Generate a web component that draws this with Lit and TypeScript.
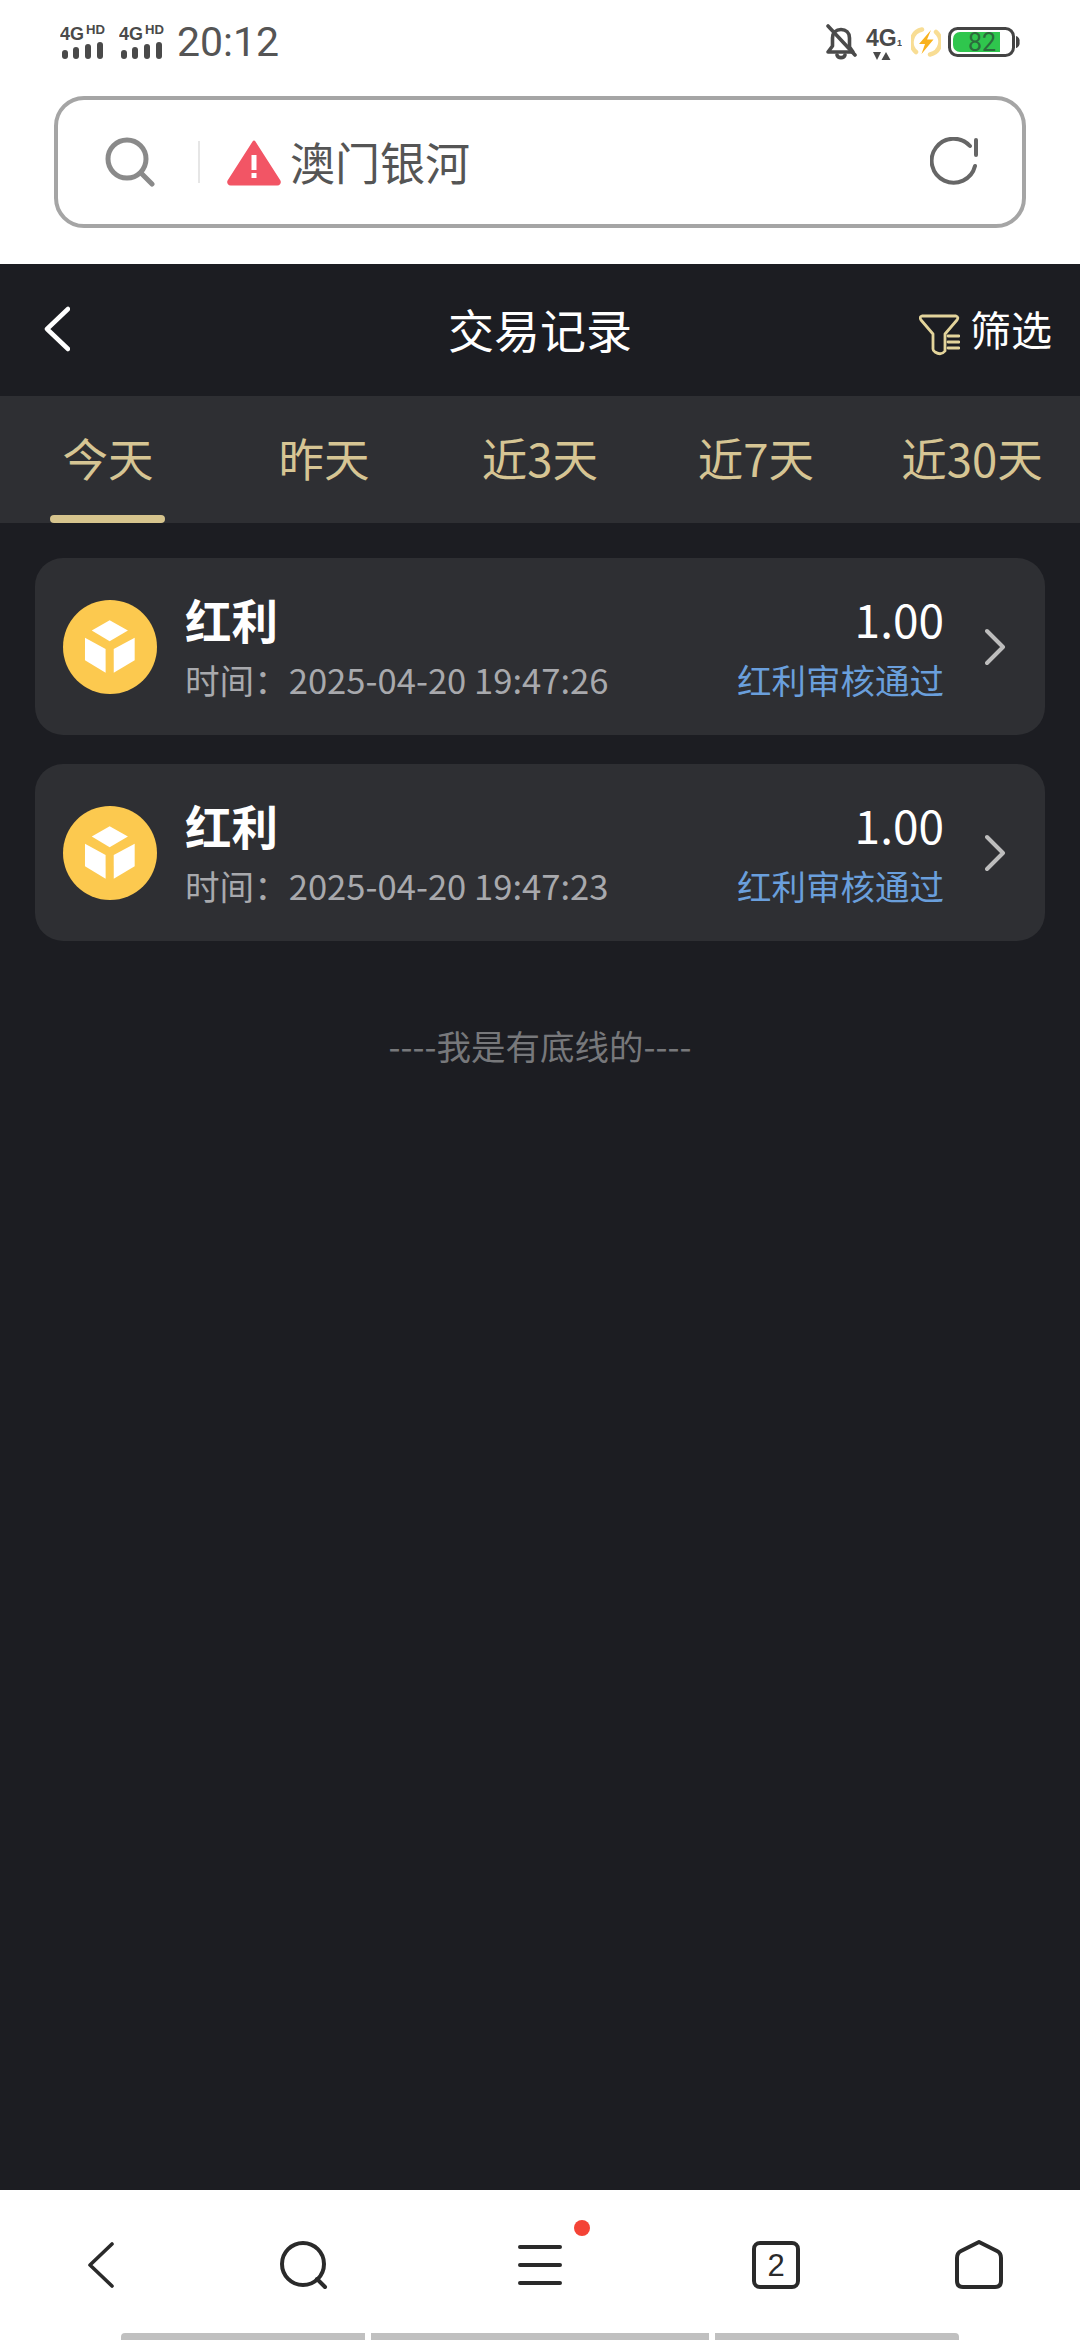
import { LitElement, html, css } from "lit";
import { customElement } from "lit/decorators.js";

const signal = html`<svg class="signal" width="46" height="36" viewBox="0 0 46 36">
  <text x="0" y="16" class="sig-4g" textLength="24" lengthAdjust="spacingAndGlyphs">4G</text>
  <text x="26" y="10" class="sig-hd" textLength="19" lengthAdjust="spacingAndGlyphs">HD</text>
  <g fill="#4a4a4a">
    <rect x="2" y="26" width="6" height="9" rx="3"/>
    <rect x="13" y="23" width="6" height="12" rx="3"/>
    <rect x="25" y="20" width="6" height="15" rx="3"/>
    <rect x="37" y="18" width="6" height="17" rx="3"/>
  </g>
</svg>`;

const records = [
  { time: "2025-04-20 19:47:26" },
  { time: "2025-04-20 19:47:23" },
];

const tabs = ["今天", "昨天", "近3天", "近7天", "近30天"];

@customElement("app-root")
export class AppRoot extends LitElement {
  static styles = css`
    :host {
      display: block;
      width: 1080px;
      height: 2340px;
      font-family: "Noto Sans CJK SC", "Noto Sans", sans-serif;
    }
    svg { display: block; flex: none; }
    .page {
      width: 1080px;
      height: 2340px;
      display: flex;
      flex-direction: column;
      background: #fff;
      overflow: hidden;
    }
    .status {
      height: 84px;
      display: flex;
      align-items: center;
      padding: 0 60px;
      box-sizing: border-box;
      flex: none;
    }
    .signal { margin-right: 13px; }
    .sig-4g { font: 700 18.5px "Liberation Sans", sans-serif; fill: #4a4a4a; }
    .sig-hd { font: 700 12px "Liberation Sans", sans-serif; fill: #4a4a4a; }
    .clock {
      font: 400 41px/1 Roboto, sans-serif;
      margin-left: -1px;
      color: #555;
    }
    .status-right {
      margin-left: auto;
      display: flex;
      align-items: center;
    }
    .net { margin-left: 9px; }
    .net-4g { font: 700 23px "Liberation Sans", sans-serif; fill: #4a4a4a; }
    .net-1 { font: 700 9px "Liberation Sans", sans-serif; fill: #4a4a4a; }
    .bolt { margin-left: 9px; }
    .battery { margin-left: 7px; }
    .batt-text { font: 400 25px Roboto, sans-serif; fill: #2c6b3c; }

    .search-wrap { padding: 12px 54px 36px; flex: none; }
    .search {
      height: 132px;
      box-sizing: border-box;
      border: 4px solid #a5a5a5;
      border-radius: 30px;
      display: flex;
      align-items: center;
      padding: 0 44px 0 47px;
    }
    .divider {
      width: 2px;
      height: 42px;
      background: #e6e6e6;
      margin: 0 26px 0 43px;
    }
    .search-text {
      font-size: 45px;
      line-height: 60px;
      color: #555;
      margin-left: 8px;
      flex: 1;
    }

    .main {
      flex: 1;
      display: flex;
      flex-direction: column;
      background: #1c1d22;
      min-height: 0;
    }
    .nav {
      height: 132px;
      flex: none;
      display: grid;
      grid-template-columns: 1fr auto 1fr;
      align-items: center;
      padding: 0 28px;
    }
    .back { margin: 0 0 2px 16px; }
    .title { font-size: 46px; line-height: 60px; color: #fff; margin-bottom: 5px; }
    .filter {
      justify-self: end;
      display: flex;
      align-items: center;
      gap: 10px;
      font-size: 41px;
      line-height: 50px;
      color: #fff;
      margin-bottom: 5px;
    }
    .filter svg { margin-top: 14px; }
    .tabs {
      height: 127px;
      flex: none;
      display: grid;
      grid-template-columns: repeat(5, 216px);
      background: #2e2f33;
    }
    .tab {
      position: relative;
      display: flex;
      justify-content: center;
      padding-top: 31px;
      box-sizing: border-box;
      font-size: 45.5px;
      line-height: 60px;
      color: #d6c594;
    }
    .tab.active::after {
      content: "";
      position: absolute;
      left: 50px;
      width: 115px;
      bottom: 0;
      height: 8px;
      border-radius: 4px;
      background: #d6c48d;
    }
    .list {
      display: flex;
      flex-direction: column;
      gap: 29px;
      padding: 35px 35px 0;
    }
    .card {
      height: 177px;
      box-sizing: border-box;
      background: #2e2f33;
      border-radius: 28px;
      display: flex;
      align-items: center;
      padding: 0 38px 0 28px;
    }
    .info { margin-left: 28px; flex: 1; padding-top: 4px; }
    .name { font-size: 46.5px; font-weight: 700; line-height: 61px; color: #fff; }
    .time { font-size: 34.6px; line-height: 61px; color: #a8a9ad; white-space: nowrap; }
    .amount {
      display: flex;
      flex-direction: column;
      align-items: flex-end;
      padding-top: 5px;
    }
    .value { font-size: 46px; line-height: 61px; color: #fff; }
    .state { font-size: 34.5px; line-height: 61px; color: #6a9fdc; }
    .chev { margin-left: 41px; }
    .end {
      margin-top: 79px;
      text-align: center;
      font-size: 34.5px;
      line-height: 50px;
      color: #77787b;
    }

    .bottom {
      height: 150px;
      flex: none;
      background: #fff;
      display: flex;
      flex-direction: column;
    }
    .icons {
      flex: 1;
      display: grid;
      grid-template-columns: 202px 203px 270px 202px 203px;
      justify-items: center;
      align-items: center;
      padding-top: 6px;
    }
    .menu { position: relative; }
    .dot {
      position: absolute;
      left: 56px;
      top: -25px;
      width: 16px;
      height: 16px;
      border-radius: 50%;
      background: #f44336;
    }
    .tabnum { font: 400 31px "Liberation Sans", sans-serif; fill: #2a2a2a; }
    .gesture {
      height: 7px;
      flex: none;
      display: flex;
      gap: 6px;
      padding: 0 121px;
    }
    .seg { background: #c0c0c0; }
    .seg.a { width: 244px; border-radius: 4px 0 0 0; }
    .seg.b { width: 338px; }
    .seg.c { width: 244px; border-radius: 0 4px 0 0; }
  `;

  render() {
    return html`<div class="page">
      <div class="status">
        ${signal}${signal}
        <span class="clock">20:12</span>
        <div class="status-right">
          <svg width="32" height="36" viewBox="0 0 32 36" fill="none" stroke="#4a4a4a" stroke-width="3.6" stroke-linecap="round" stroke-linejoin="round">
            <path d="M7.5 14 C7.5 9 11 5.5 16 5.5 C21 5.5 24.5 9 24.5 14 V23 L28 28 H3 L7.5 22 Z"/>
            <path d="M12 31 C13 34.5 19 34.5 20 31"/>
            <path d="M3 2 L30 31"/>
          </svg>
          <svg class="net" width="36" height="40" viewBox="0 -6 36 40">
            <text x="0" y="18" class="net-4g">4G</text>
            <text x="31" y="18" class="net-1">1</text>
            <path d="M7 24 H15 L11 32 Z M15.5 32 L20 24 L24.5 32 Z" fill="#4a4a4a"/>
          </svg>
          <svg class="bolt" width="30" height="30" viewBox="0 0 30 30" fill="none">
            <path d="M11 2.5 A13 13 0 0 0 5 25" stroke="#f8dd94" stroke-width="4.5" stroke-linecap="round"/>
            <path d="M19 27.5 A13 13 0 0 0 25 5" stroke="#f8dd94" stroke-width="4.5" stroke-linecap="round"/>
            <path d="M20 3 L8 17 H14 L10.5 27 L22.5 12.5 H16 Z" fill="#f9b21d"/>
          </svg>
          <svg class="battery" width="72" height="30" viewBox="0 0 72 30">
            <rect x="1.5" y="1.5" width="64" height="27" rx="8" fill="#fff" stroke="#444" stroke-width="3"/>
            <path d="M5 12 a7 7 0 0 1 7 -7 H52 V25 H12 a7 7 0 0 1 -7 -7 Z" fill="#2fc64d"/>
            <path d="M68 9 a5 5 0 0 1 3.5 6 a5 5 0 0 1 -3.5 6 Z" fill="#444"/>
            <text x="20" y="24" class="batt-text">82</text>
          </svg>
        </div>
      </div>

      <div class="search-wrap">
        <div class="search">
          <svg width="50" height="50" viewBox="0 0 50 50" fill="none" stroke="#8a8a8a" stroke-width="5" stroke-linecap="round">
            <circle cx="22" cy="22" r="19"/>
            <path d="M36 36 L47 47"/>
          </svg>
          <div class="divider"></div>
          <svg width="56" height="48" viewBox="0 0 56 48">
            <path d="M28 4 L53 43 a2 2 0 0 1 -2 3 H5 a2 2 0 0 1 -2 -3 Z" fill="#f25565" stroke="#f25565" stroke-width="3" stroke-linejoin="round"/>
            <rect x="25.5" y="17" width="5" height="15" fill="#fff"/>
            <rect x="25.5" y="35" width="5" height="5" fill="#fff"/>
          </svg>
          <span class="search-text">澳门银河</span>
          <svg width="48" height="50" viewBox="0 0 48 50" fill="none" stroke="#666" stroke-width="4" stroke-linecap="round">
            <path d="M45 29 A22 22 0 1 1 40 9"/>
            <path d="M46 3 V18"/>
          </svg>
        </div>
      </div>

      <div class="main">
        <div class="nav">
          <svg class="back" width="26" height="46" viewBox="0 0 26 46" fill="none" stroke="#fff" stroke-width="4.5" stroke-linecap="round" stroke-linejoin="round">
            <path d="M24 3 L3 23 L24 43"/>
          </svg>
          <div class="title">交易记录</div>
          <div class="filter">
            <svg width="41" height="42" viewBox="0 0 41 42" fill="none" stroke="#e3d49b" stroke-width="2.8" stroke-linecap="round" stroke-linejoin="round">
              <path d="M3 2 H37 Q40 3 38 6 L26 20 V37 Q22 42 16 38 Q14 37 14 35 V20 L2 6 Q0 3 3 2 Z"/>
              <path d="M29 22 H40 M29 28 H40 M29 34 H40"/>
            </svg>
            <span>筛选</span>
          </div>
        </div>
        <div class="tabs">
          ${tabs.map((t, i) => html`<div class="tab ${i === 0 ? "active" : ""}">${t}</div>`)}
        </div>
        <div class="list">
          ${records.map(
            (r) => html`<div class="card">
              <svg width="94" height="94" viewBox="70 60 278 278">
                <circle cx="209" cy="199" r="139" fill="#fcc94f"/>
                <path d="M208 120 L262 150 L208 182 L155 150 Z" fill="#fff"/>
                <path d="M135 172 L196 205 V275 L135 238 Z" fill="#fff"/>
                <path d="M220 205 L282 172 V238 L220 275 Z" fill="#fff"/>
              </svg>
              <div class="info">
                <div class="name">红利</div>
                <div class="time">时间：${r.time}</div>
              </div>
              <div class="amount">
                <div class="value">1.00</div>
                <div class="state">红利审核通过</div>
              </div>
              <svg class="chev" width="22" height="38" viewBox="0 0 22 38" fill="none" stroke="#bdbdbd" stroke-width="4" stroke-linecap="round" stroke-linejoin="round">
                <path d="M2 3 L18 19 L2 35"/>
              </svg>
            </div>`
          )}
        </div>
        <div class="end">----我是有底线的----</div>
      </div>

      <div class="bottom">
        <div class="icons">
          <svg width="26" height="46" viewBox="0 0 26 46" fill="none" stroke="#2a2a2a" stroke-width="3.6" stroke-linecap="round" stroke-linejoin="round">
            <path d="M24 2 L2 23 L24 44"/>
          </svg>
          <svg width="50" height="50" viewBox="0 0 50 50" fill="none" stroke="#2a2a2a" stroke-width="4" stroke-linecap="round">
            <circle cx="24" cy="24" r="21"/>
            <path d="M38 39 L46 47"/>
          </svg>
          <div class="menu">
            <svg width="44" height="40" viewBox="0 0 44 40" fill="none" stroke="#2a2a2a" stroke-width="4" stroke-linecap="round">
              <path d="M2 2 H42 M2 20 H42 M2 38 H42"/>
            </svg>
            <span class="dot"></span>
          </div>
          <svg width="48" height="48" viewBox="0 0 48 48">
            <rect x="2" y="2" width="44" height="44" rx="6" fill="none" stroke="#2a2a2a" stroke-width="4"/>
            <text x="24" y="35" text-anchor="middle" class="tabnum">2</text>
          </svg>
          <svg width="48" height="50" viewBox="0 0 48 50" fill="none" stroke="#2a2a2a" stroke-width="4" stroke-linejoin="round">
            <path d="M24 2 L42 11 Q46 13 46 18 V41 Q46 47 40 47 H8 Q2 47 2 41 V18 Q2 13 6 11 Z"/>
          </svg>
        </div>
        <div class="gesture">
          <div class="seg a"></div>
          <div class="seg b"></div>
          <div class="seg c"></div>
        </div>
      </div>
    </div>`;
  }
}
